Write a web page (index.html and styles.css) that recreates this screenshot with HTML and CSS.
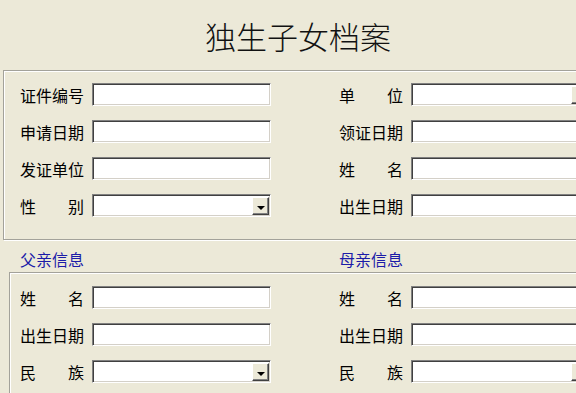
FILE: index.html
```html
<!DOCTYPE html>
<html lang="zh-CN">
<head>
    <meta charset="UTF-8">
    <title>独生子女档案</title>
    <link rel="stylesheet" href="styles.css">
</head>
<body>
    <div class="page">
        <h1 class="title">独生子女档案</h1>

        <div class="group group-main">
            <div class="fields">
                <div class="field"><label>证件编号</label><div class="box"></div></div>
                <div class="field"><label>单位</label><div class="box select"><span class="drop"></span></div></div>
                <div class="field"><label>申请日期</label><div class="box"></div></div>
                <div class="field"><label>领证日期</label><div class="box"></div></div>
                <div class="field"><label>发证单位</label><div class="box"></div></div>
                <div class="field"><label>姓名</label><div class="box"></div></div>
                <div class="field"><label>性别</label><div class="box select"><span class="drop"></span></div></div>
                <div class="field"><label>出生日期</label><div class="box"></div></div>
            </div>
        </div>

        <div class="heads">
            <span class="head">父亲信息</span>
            <span class="head">母亲信息</span>
        </div>

        <div class="group group-parents">
            <div class="fields">
                <div class="field"><label>姓名</label><div class="box"></div></div>
                <div class="field"><label>姓名</label><div class="box"></div></div>
                <div class="field"><label>出生日期</label><div class="box"></div></div>
                <div class="field"><label>出生日期</label><div class="box"></div></div>
                <div class="field"><label>民族</label><div class="box select"><span class="drop"></span></div></div>
                <div class="field"><label>民族</label><div class="box select"><span class="drop"></span></div></div>
            </div>
        </div>
    </div>
</body>
</html>
```

FILE: styles.css
```css
body {
    margin: 0;
    background: #ece9d8;
    font-family: "Noto Sans CJK SC", "DejaVu Sans", sans-serif;
    overflow: hidden;
}
.page {
    width: 596px;
}
.title {
    margin: 0 0 16px;
    padding-top: 18px;
    font-size: 31px;
    line-height: 36px;
    font-weight: 300;
    color: #111;
    text-align: center;
}
.group {
    border: 1px solid #a3a29a;
    box-shadow: inset 1px 1px 0 #fff, 1px 1px 0 #fff;
}
.group-main {
    margin: 0 3px;
    padding: 12px 0 22px 16px;
}
.group-parents {
    margin: 0 0 0 9px;
    padding: 13px 0 20px 10px;
}
.fields {
    display: grid;
    grid-template-columns: 251px 251px;
    column-gap: 68px;
    row-gap: 14px;
}
.field {
    display: flex;
    align-items: center;
    gap: 8px;
    height: 23px;
}
.field label {
    width: 64px;
    font-size: 16px;
    line-height: 20px;
    color: #000;
    text-align: justify;
    text-align-last: justify;
}
.box {
    position: relative;
    width: 179px;
    height: 23px;
    box-sizing: border-box;
    background: #fff;
    border-top: 1px solid #808080;
    border-left: 1px solid #808080;
    border-right: 1px solid #fff;
    border-bottom: 1px solid #fff;
    box-shadow: inset 1px 1px 0 #404040, inset -1px -1px 0 #d4d0c8;
}
.drop {
    position: absolute;
    top: 2px;
    right: 1px;
    bottom: 1px;
    width: 17px;
    background: #ece9d8;
    box-sizing: border-box;
    border-top: 1px solid #fff;
    border-left: 1px solid #fff;
    border-right: 1px solid #404040;
    border-bottom: 1px solid #404040;
    box-shadow: inset -1px -1px 0 #808080;
}
.drop::after {
    content: "";
    position: absolute;
    left: 4px;
    top: 8px;
    border-left: 4px solid transparent;
    border-right: 4px solid transparent;
    border-top: 4px solid #000;
}
.heads {
    display: grid;
    grid-template-columns: 319px 200px;
    padding: 9px 0 0 20px;
    height: 23px;
}
.head {
    font-size: 16px;
    line-height: 20px;
    color: #1c1ca8;
}
```
